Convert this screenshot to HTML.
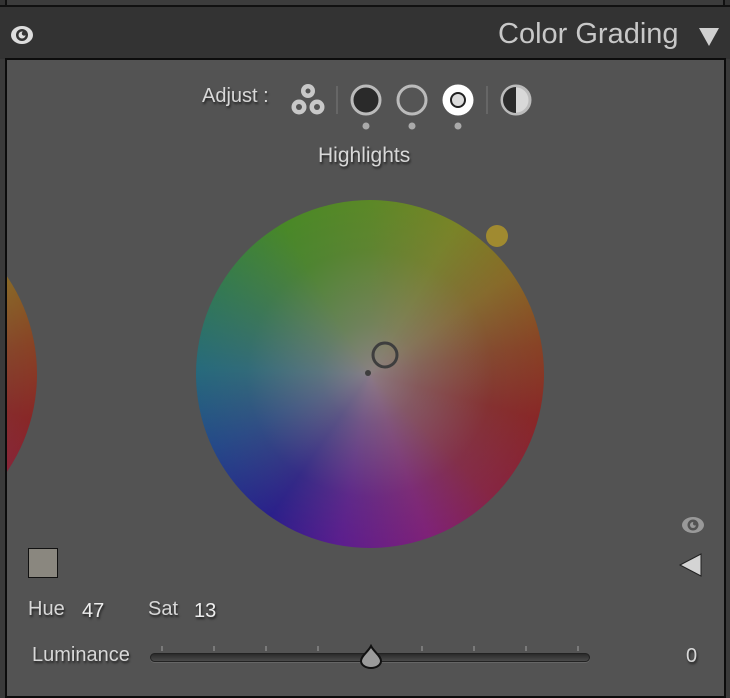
<!DOCTYPE html>
<html><head><meta charset="utf-8"><style>
*{margin:0;padding:0;box-sizing:border-box}
body{width:730px;height:692px;background:#3a3a3a;position:relative;overflow:hidden;font-family:"Liberation Sans",sans-serif;}
.abs{position:absolute}
.topstrip{left:0;top:0;width:730px;height:7px;background:#333;border-bottom:2px solid #111}
.topstrip:before{content:"";position:absolute;left:5px;right:5px;top:0;height:5px;background:#3c3c3c;border-left:2px solid #111;border-right:2px solid #111}
.header{left:0;top:7px;width:730px;height:52px;background:#333}
.panel{left:5px;top:58px;width:721px;height:640px;background:#535353;border:2px solid #0c0c0c;overflow:hidden}
.wheel{width:348px;height:348px;border-radius:50%;
background:radial-gradient(circle at 50% 50%, rgba(140,128,135,0.95) 0%, rgba(130,125,128,0.6) 20%, rgba(110,110,110,0.2) 50%, rgba(90,90,90,0) 80%),
conic-gradient(from 0deg,#5a8a22 0deg,#7a8522 30deg,#8a6a22 55deg,#8a4020 80deg,#8a2222 105deg,#882040 135deg,#801c78 160deg,#5a1890 190deg,#261a8c 215deg,#20468a 245deg,#226a7c 272deg,#307a50 300deg,#468a22 330deg,#5a8a22 360deg);}
.txt{color:#d8d8d8;text-shadow:1px 2px 2px #222}
</style></head><body>
<div class="abs topstrip"></div>
<div class="abs header"></div>
<svg class="abs" style="left:9px;top:24px" width="26" height="22" viewBox="0 0 26 22"><ellipse cx="13" cy="11" rx="11" ry="9" fill="#ddd"/><circle cx="13" cy="11" r="6" fill="#333"/><circle cx="13" cy="11" r="3.5" fill="#ddd"/><circle cx="15" cy="9.5" r="2.2" fill="#333"/></svg>
<div class="abs" style="left:498px;top:18px;font-size:29px;color:#c8c8c8;">Color Grading</div>
<svg class="abs" style="left:697px;top:27px" width="24" height="20"><polygon points="2,1 22,1 12,19" fill="#d0d0d0"/></svg>
<div class="abs panel">
 <div class="abs wheel" style="left:-318px;top:140px"></div>
 <div class="abs wheel" style="left:189px;top:140px"></div>
</div>
<div class="abs txt" style="left:202px;top:85px;font-size:20px;">Adjust :</div>
<svg class="abs" style="left:288px;top:80px" width="250" height="52">
 <g fill="#c8c8c8"><circle cx="20" cy="11" r="7"/><circle cx="11" cy="27" r="7.5"/><circle cx="29" cy="27" r="7.5"/></g>
 <g fill="#535353"><circle cx="20" cy="11" r="2.5"/><circle cx="11" cy="27" r="3"/><circle cx="29" cy="27" r="3"/></g>
 <rect x="48" y="6" width="2" height="28" fill="#666"/>
 <circle cx="78" cy="20" r="14" fill="#2a2a2a" stroke="#bbb" stroke-width="3"/>
 <circle cx="124" cy="20" r="14" fill="#555" stroke="#bbb" stroke-width="3"/>
 <circle cx="170" cy="20" r="15.5" fill="#fff"/><circle cx="170" cy="20" r="7" fill="#ddd" stroke="#222" stroke-width="2"/>
 <rect x="198" y="6" width="2" height="28" fill="#666"/>
 <circle cx="228" cy="20" r="14" fill="#d8d8d8" stroke="#bbb" stroke-width="3"/><path d="M228 7 A13 13 0 0 0 228 33 Z" fill="#2a2a2a"/>
 <g fill="#aaa"><circle cx="78" cy="46" r="3.5"/><circle cx="124" cy="46" r="3.5"/><circle cx="170" cy="46" r="3.5"/></g>
</svg>
<div class="abs txt" style="left:318px;top:144px;font-size:21px;">Highlights</div>
<svg class="abs" style="left:360px;top:340px" width="150" height="40"><circle cx="25" cy="15" r="12" fill="none" stroke="#3e3e3e" stroke-width="3"/><circle cx="8" cy="33" r="3" fill="#3e3e3e"/></svg>
<div class="abs" style="left:486px;top:225px;width:22px;height:22px;border-radius:50%;background:#a08a30"></div>
<svg class="abs" style="left:680px;top:514px" width="26" height="22"><ellipse cx="13" cy="11" rx="11" ry="8" fill="#999"/><circle cx="13" cy="11" r="5.5" fill="#535353"/><circle cx="13" cy="11" r="3" fill="#999"/><circle cx="15" cy="9.5" r="2" fill="#535353"/></svg>
<svg class="abs" style="left:678px;top:552px" width="26" height="26"><polygon points="2,13 23,2 23,24" fill="#d4d4d4" stroke="#222" stroke-width="1"/></svg>
<div class="abs" style="left:28px;top:548px;width:30px;height:30px;background:#8a877f;border:1px solid #111"></div>
<div class="abs txt" style="left:28px;top:598px;font-size:20px;">Hue</div>
<div class="abs txt" style="left:82px;top:600px;font-size:20px;color:#eee">47</div>
<div class="abs txt" style="left:148px;top:598px;font-size:20px;">Sat</div>
<div class="abs txt" style="left:194px;top:600px;font-size:20px;color:#eee">13</div>
<div class="abs txt" style="left:32px;top:644px;font-size:20px;">Luminance</div>
<div class="abs txt" style="left:686px;top:645px;font-size:20px;">0</div>
<div class="abs" style="left:150px;top:653px;width:440px;height:9px;border-radius:5px;background:linear-gradient(#2a2a2a,#4a4a4a);border:1px solid #222;box-shadow:0 1px 0 #666"></div>
<svg class="abs" style="left:150px;top:643px" width="440" height="10"><g stroke="#888" stroke-width="1.5">
<line x1="12" y1="3" x2="12" y2="8"/><line x1="64" y1="3" x2="64" y2="8"/><line x1="116" y1="3" x2="116" y2="8"/><line x1="168" y1="3" x2="168" y2="8"/><line x1="272" y1="3" x2="272" y2="8"/><line x1="324" y1="3" x2="324" y2="8"/><line x1="376" y1="3" x2="376" y2="8"/><line x1="428" y1="3" x2="428" y2="8"/></g></svg>
<svg class="abs" style="left:358px;top:644px" width="26" height="26"><path d="M13 2 C16 8 23 12 23 17 A10 7 0 0 1 3 17 C3 12 10 8 13 2 Z" fill="#9a9a9a" stroke="#111" stroke-width="2"/></svg>
</body></html>
